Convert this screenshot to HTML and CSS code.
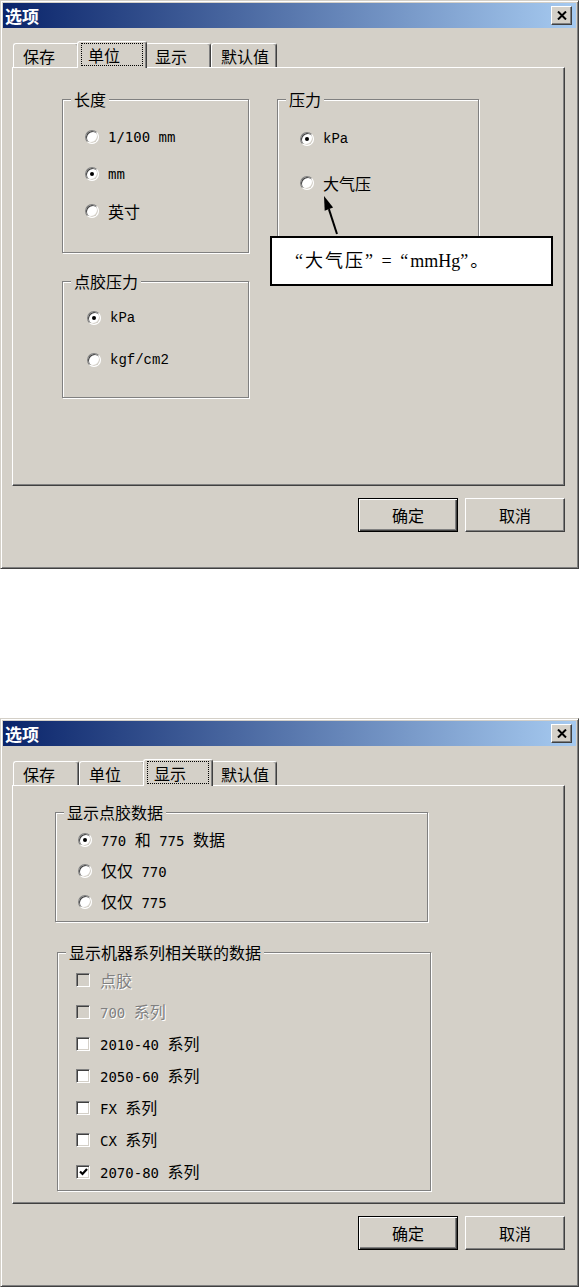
FILE: index.html
```html
<!DOCTYPE html>
<html lang="zh-CN">
<head>
    <meta charset="UTF-8">
    <title>选项</title>
    <link rel="stylesheet" href="styles.css">
</head>
<body>
<div class="page">

    <!-- 单位 tab -->
    <div class="window">
        <div class="titlebar">
            <span class="title">选项</span>
            <span class="close"><svg width="10" height="9" viewBox="0 0 10 9"><path d="M1 0.5 L9 8.5 M9 0.5 L1 8.5" stroke="#000" stroke-width="2"/></svg></span>
        </div>
        <div class="client">
            <div class="tabs">
                <div class="tab">保存</div>
                <div class="tab active"><span class="focus">单位</span></div>
                <div class="tab">显示</div>
                <div class="tab">默认值</div>
            </div>
            <div class="panel">
                <div class="cols">
                    <div class="col">
                        <fieldset class="group g-len">
                            <legend>长度</legend>
                            <div class="rows">
                                <div class="opt"><span class="radio"></span><span class="en">1/100 mm</span></div>
                                <div class="opt"><span class="radio on"></span><span class="en">mm</span></div>
                                <div class="opt"><span class="radio"></span><span>英寸</span></div>
                            </div>
                        </fieldset>
                        <fieldset class="group g-dot">
                            <legend>点胶压力</legend>
                            <div class="rows">
                                <div class="opt"><span class="radio on"></span><span class="en serif">kPa</span></div>
                                <div class="opt"><span class="radio"></span><span class="en serif">kgf/cm2</span></div>
                            </div>
                        </fieldset>
                    </div>
                    <fieldset class="group g-press">
                        <legend>压力</legend>
                        <div class="rows">
                            <div class="opt"><span class="radio on"></span><span class="en serif">kPa</span></div>
                            <div class="opt"><span class="radio"></span><span>大气压</span></div>
                        </div>
                    </fieldset>
                </div>

                <svg class="arrow" width="26" height="44" viewBox="0 0 26 44">
                    <path d="M22 41 L13.9 16.1" stroke="#000" stroke-width="2"/>
                    <path d="M9 3 L18.1 14.5 L9.7 17.7 Z" fill="#000"/>
                </svg>
                <div class="callout">“大气压” = “<span class="tight">mmHg</span>”。</div>
            </div>
            <div class="buttons">
                <div class="btn default">确定</div>
                <div class="btn">取消</div>
            </div>
        </div>
    </div>

    <!-- 显示 tab -->
    <div class="window">
        <div class="titlebar">
            <span class="title">选项</span>
            <span class="close"><svg width="10" height="9" viewBox="0 0 10 9"><path d="M1 0.5 L9 8.5 M9 0.5 L1 8.5" stroke="#000" stroke-width="2"/></svg></span>
        </div>
        <div class="client">
            <div class="tabs">
                <div class="tab">保存</div>
                <div class="tab">单位</div>
                <div class="tab active"><span class="focus">显示</span></div>
                <div class="tab">默认值</div>
            </div>
            <div class="panel display">
                <fieldset class="group g-show">
                    <legend>显示点胶数据</legend>
                    <div class="rows">
                        <div class="opt"><span class="radio on"></span><span><span class="en">770 </span>和<span class="en"> 775 </span>数据</span></div>
                        <div class="opt"><span class="radio"></span><span>仅仅<span class="en"> 770</span></span></div>
                        <div class="opt"><span class="radio"></span><span>仅仅<span class="en"> 775</span></span></div>
                    </div>
                </fieldset>
                <fieldset class="group g-series">
                    <legend>显示机器系列相关联的数据</legend>
                    <div class="rows">
                        <div class="opt off"><span class="check"></span><span>点胶</span></div>
                        <div class="opt off"><span class="check"></span><span><span class="en">700 </span>系列</span></div>
                        <div class="opt"><span class="check"></span><span><span class="en">2010-40 </span>系列</span></div>
                        <div class="opt"><span class="check"></span><span><span class="en">2050-60 </span>系列</span></div>
                        <div class="opt"><span class="check"></span><span><span class="en">FX </span>系列</span></div>
                        <div class="opt"><span class="check"></span><span><span class="en">CX </span>系列</span></div>
                        <div class="opt"><span class="check"><svg width="9" height="8" viewBox="0 0 9 8"><path d="M1 3.5 L3.5 6 L8 1" stroke="#000" stroke-width="2.2" fill="none"/></svg></span><span><span class="en">2070-80 </span>系列</span></div>
                    </div>
                </fieldset>
            </div>
            <div class="buttons">
                <div class="btn default">确定</div>
                <div class="btn">取消</div>
            </div>
        </div>
    </div>

</div>
</body>
</html>
```

FILE: styles.css
```css
body {
    margin: 0;
    background: #fff;
    font-family: "Noto Sans CJK SC", "Noto Sans", sans-serif;
    font-size: 16px;
    line-height: 20px;
    color: #000;
}
.page {
    display: flex;
    flex-direction: column;
    gap: 149px;
}

/* window frame */
.window {
    box-sizing: border-box;
    width: 579px;
    height: 569px;
    padding: 2px;
    background: #d4d0c8;
    border: 1px solid;
    border-color: #d4d0c8 #404040 #404040 #d4d0c8;
    box-shadow: inset 1px 1px 0 #fff, inset -1px -1px 0 #808080;
}
.titlebar {
    height: 25px;
    display: flex;
    align-items: center;
    justify-content: space-between;
    padding: 0 4px 0 2px;
    background: linear-gradient(to right, #0a246a, #a6caf0);
    color: #fff;
}
.title {
    font-weight: bold;
    font-size: 17px;
}
.close {
    box-sizing: border-box;
    width: 21px;
    height: 19px;
    display: flex;
    align-items: center;
    justify-content: center;
    background: #d4d0c8;
    border: 1px solid;
    border-color: #fff #404040 #404040 #fff;
    box-shadow: inset -1px -1px 0 #808080;
}
.client {
    padding: 13px 0 0 9px;
}

/* tabs */
.tabs {
    display: flex;
    align-items: flex-end;
    height: 26px;
    padding-left: 1px;
}
.tab {
    box-sizing: border-box;
    width: 66px;
    height: 24px;
    padding: 2px 0 0 9px;
    border-top: 1px solid #fff;
    border-left: 1px solid #fff;
    border-right: 1px solid #404040;
    border-radius: 3px 3px 0 0;
    box-shadow: inset -1px 0 0 #808080;
}
.tab.active {
    position: relative;
    z-index: 1;
    width: 70px;
    height: 27px;
    margin: 0 -2px -1px;
    padding: 1px 3px 2px 3px;
    background: #d4d0c8;
}
.focus {
    display: block;
    box-sizing: border-box;
    height: 100%;
    padding: 1px 0 0 6px;
    border: 1px dotted #000;
}

/* tab page */
.panel {
    position: relative;
    box-sizing: border-box;
    width: 553px;
    height: 419px;
    border: 1px solid;
    border-color: #fff #404040 #404040 #fff;
    box-shadow: inset -1px -1px 0 #808080;
}
.cols {
    display: flex;
    align-items: flex-start;
    gap: 28px;
    padding: 21px 0 0 49px;
}
.col {
    display: flex;
    flex-direction: column;
    gap: 18px;
}

/* group boxes */
.group {
    box-sizing: border-box;
    margin: 0;
    padding: 0;
    min-width: 0;
    border: 1px solid #808080;
    box-shadow: inset 1px 1px 0 #fff, 1px 1px 0 #fff;
}
.group legend {
    margin-left: 8px;
    padding: 0 3px;
    line-height: 20px;
    background: #d4d0c8;
}
.rows {
    display: flex;
    flex-direction: column;
}
.g-len { width: 187px; }
.g-len .rows { padding: 18px 0 31px 22px; gap: 17px; }
.g-dot { width: 187px; }
.g-dot .rows { padding: 17px 0 27px 24px; gap: 22px; }
.g-press { width: 202px; }
.g-press .rows { padding: 20px 0 59px 22px; gap: 24px; }

.display {
    padding: 16px 0 0 42px;
}
.g-show { width: 373px; }
.g-show .rows { padding: 8px 0 9px 22px; gap: 11px; }
.g-series { width: 374px; margin: 20px 0 0 2px; }
.g-series .rows { padding: 8px 0 8px 18px; gap: 12px; }

/* radios & checkboxes */
.opt {
    display: flex;
    align-items: center;
    height: 20px;
    gap: 9px;
    white-space: pre;
}
.en {
    font-family: "DejaVu Sans Mono", monospace;
    font-size: 14px;
}
.en.serif {
    font-family: "Liberation Mono", monospace;
}
.radio {
    box-sizing: border-box;
    flex: none;
    width: 14px;
    height: 14px;
    display: flex;
    align-items: center;
    justify-content: center;
    border-radius: 50%;
    background: #fff;
    border: 1px solid;
    border-color: #808080 #fff #fff #808080;
    box-shadow: inset 1px 1px 0 #404040, inset -1px -1px 0 #d4d0c8;
}
.radio.on::after {
    content: "";
    width: 4px;
    height: 4px;
    border-radius: 50%;
    background: #000;
}
.check {
    box-sizing: border-box;
    flex: none;
    width: 14px;
    height: 14px;
    margin-right: 1px;
    display: flex;
    align-items: center;
    justify-content: center;
    background: #fff;
    border: 1px solid;
    border-color: #808080 #fff #fff #808080;
    box-shadow: inset 1px 1px 0 #404040, inset -1px -1px 0 #d4d0c8;
}
.opt.off {
    color: #808080;
    text-shadow: 1px 1px 0 #fff;
}
.opt.off .check {
    background: #d4d0c8;
}

/* note over the 单位 page */
.callout {
    position: absolute;
    left: 257px;
    top: 168px;
    box-sizing: border-box;
    width: 283px;
    height: 50px;
    display: flex;
    align-items: center;
    padding-left: 23px;
    background: #fff;
    border: 2px solid #000;
    font-family: "Liberation Serif", "Noto Sans CJK SC", serif;
    font-size: 18px;
    letter-spacing: 2px;
    white-space: pre;
}
.callout .tight {
    letter-spacing: 0;
}
.arrow {
    position: absolute;
    left: 302px;
    top: 125px;
}

/* buttons */
.buttons {
    width: 553px;
    display: flex;
    justify-content: flex-end;
    gap: 7px;
    margin-top: 12px;
}
.btn {
    box-sizing: border-box;
    width: 100px;
    height: 34px;
    display: flex;
    align-items: center;
    justify-content: center;
    border: 1px solid;
    border-color: #fff #404040 #404040 #fff;
    box-shadow: inset -1px -1px 0 #808080;
}
.btn.default {
    border-color: #000;
    box-shadow: inset 1px 1px 0 #fff, inset -1px -1px 0 #404040, inset -2px -2px 0 #808080;
}
```
